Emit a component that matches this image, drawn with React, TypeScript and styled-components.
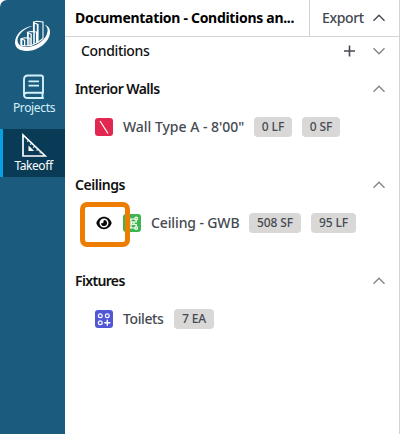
import React from "react";
import styled, { createGlobalStyle } from "styled-components";

const GlobalStyle = createGlobalStyle`
  * { box-sizing: border-box; }
  body { margin: 0; background: #fff; overflow: hidden; }
  svg { display: block; flex: none; }
`;

const Page = styled.div`
  display: flex;
  width: 401px;
  height: 434px;
  background: #fff;
  font-family: "Noto Sans", "Open Sans", sans-serif;
  font-size: 14px;
  color: #111;
`;

const Sidebar = styled.nav`
  width: 65px;
  flex: none;
  background: #1b5b7e;
  border-top-left-radius: 7px;
  display: flex;
  flex-direction: column;
`;

const LogoBox = styled.div`
  height: 65px;
  padding: 18px 0 0 13px;
`;

const NavItem = styled.a<{ $active?: boolean }>`
  height: ${(p) => (p.$active ? 48 : 64)}px;
  padding: ${(p) => (p.$active ? "4px 1px 0 0" : "9px 0 0 3px")};
  display: flex;
  flex-direction: column;
  align-items: center;
  color: ${(p) => (p.$active ? "#fff" : "#d3f1fc")};
  background: ${(p) => (p.$active ? "#0a3b56" : "transparent")};
  border-left: ${(p) => (p.$active ? "3px solid #07a0e0" : "0")};
`;

const NavLabel = styled.span<{ $spacing: number }>`
  font-size: 12px;
  line-height: 16px;
  letter-spacing: ${(p) => p.$spacing}px;
  white-space: nowrap;
`;

const Panel = styled.main`
  width: 335px;
  flex: none;
  border-right: 1px solid #d2d3d5;
`;

const Header = styled.header`
  height: 37px;
  display: flex;
  border-bottom: 1px solid #d2d3d5;
`;

const Title = styled.h1<{ $spacing: number }>`
  margin: 0;
  width: 245px;
  padding-left: 10px;
  border-right: 1px solid #d2d3d5;
  font-size: 14px;
  font-weight: 700;
  line-height: 35px;
  letter-spacing: ${(p) => p.$spacing}px;
  white-space: nowrap;
  color: #000;
`;

const ExportButton = styled.div`
  flex: 1;
  display: flex;
  align-items: center;
  justify-content: space-between;
  padding: 0 14px 1px 12px;
  color: #41464f;
  font-weight: 500;
  letter-spacing: -0.35px;
`;

const Bar = styled.div<{ $indent?: boolean }>`
  height: ${(p) => (p.$indent ? 28 : 38)}px;
  display: flex;
  align-items: center;
  justify-content: space-between;
  padding: 0 14px 0 ${(p) => (p.$indent ? 16 : 10)}px;
`;

const Tools = styled.div`
  display: flex;
  align-items: center;
  gap: 17px;
`;

const Section = styled.section`
  height: 96px;
`;

const Groups = styled.div`
  padding-top: 5px;
`;

const Text = styled.span<{ $spacing?: number; $weight?: number; $muted?: boolean }>`
  font-weight: ${(p) => p.$weight ?? 500};
  letter-spacing: ${(p) => p.$spacing ?? 0}px;
  line-height: 20px;
  white-space: nowrap;
  color: ${(p) => (p.$muted ? "#454a52" : "#111")};
`;

const Row = styled.div<{ $visible?: boolean }>`
  position: relative;
  height: 38px;
  display: flex;
  align-items: center;
  padding-left: ${(p) => (p.$visible ? 58 : 30)}px;
`;

const Name = styled.div<{ $width: number }>`
  width: ${(p) => p.$width}px;
  flex: none;
  padding-left: 10px;
  line-height: 20px;
`;

const Badges = styled.div`
  display: flex;
  gap: 10px;
`;

const Badge = styled.span<{ $width: number }>`
  width: ${(p) => p.$width}px;
  height: 20px;
  border-radius: 4px;
  background: #d9d8d6;
  color: #454a52;
  font-size: 12px;
  font-weight: 500;
  line-height: 20px;
  letter-spacing: -0.1px;
  text-align: center;
  white-space: nowrap;
`;

const Swatch = styled.span<{ $color: string }>`
  width: 18px;
  height: 18px;
  flex: none;
  border-radius: 3px;
  background: ${(p) => p.$color};
`;

const Highlight = styled.div`
  position: absolute;
  left: 15px;
  top: -2px;
  width: 50px;
  height: 45px;
  border: 5px solid #ed7d00;
  border-radius: 7px;
  padding: 9px 0 0 11px;
`;

const Chevron = ({ down, color = "#858589" }: { down?: boolean; color?: string }) => (
  <svg width="12" height="8" viewBox="0 0 12 8" fill="none" stroke={color} strokeWidth="1.4">
    <path d={down ? "M.5 1.2 6 6.7 11.5 1.2" : "M.5 6.8 6 1.3 11.5 6.8"} />
  </svg>
);

const Logo = () => (
  <svg width="38" height="36" viewBox="13 18 38 36" fill="none">
    <path
      fill="#fff"
      d="M33 25.7C23 27 15 34.500 15 42.300C15 48 20 51.300 27.500 51C39 50.500 50 41.500 50 32C50 28 48 25.700 44.500 24.700C47 26.500 48 28.500 47.500 31.500C46.500 39.500 37 46.500 27.500 47C21.500 47.300 17.500 44.500 17.500 40.500C17.500 34.500 24.500 28.300 33 25.700Z"
    />
    <g fill="#1b5b7e" stroke="#fff" strokeWidth="1.1">
      <path d="M33.500 22 37 21.300 43 22V38.500L38.500 42 33.500 44Z" />
      <path d="M27.500 32.300 31 31.500 36.500 32V43L31 45.500H27.500Z" />
      <path d="M21 38.700 24.500 37.800 30 38.300V45.600L25 46 21 45Z" />
    </g>
    <path fill="#fff" d="M33.200 22 38.600 24V42.300L36.800 43V24.800L33.200 23ZM33.200 22H34.800V43.500L33.200 44ZM27.200 32.300 31.800 33.800V45.300H30.500V34.500L27.200 33ZM27.200 32.300H28.800V45.500H27.200ZM20.700 38.500 25.300 39.800V46H24V40.500L20.700 39.500ZM20.700 38.500H22.300V45.500L20.700 44.800Z" />
  </svg>
);

const BookIcon = () => (
  <svg width="24" height="26" viewBox="0 0 24 26" fill="none" stroke="currentColor" strokeWidth="1.9">
    <path d="M21 18.800V3.500Q21 1.500 19 1.500H6Q2 1.500 2 5.500V20.500Q2 24 5.500 24H21.800M5 18.800H21.900M5 18.800Q2 18.800 2 21.300M20.500 18.800V24" />
    <path strokeWidth="1.600" d="M6.500 7.400H17M6.500 11.600H17" />
  </svg>
);

const SetSquareIcon = () => (
  <svg width="26" height="25" viewBox="0 0 26 25" fill="none" stroke="#fff" strokeWidth="1.700">
    <path d="M2 2V23H24.300Z" />
    <path fill="#fff" stroke="none" d="M7.500 12.500V18H13.200Z" />
    <path strokeWidth="1.200" d="M6.200 8.700 7.200 7.700M9.200 11.700 10.200 10.700M12.200 14.700 13.600 13.300M15.600 17.500 16.700 16.400M18.800 20.200 19.500 19.500" />
  </svg>
);

const EyeIcon = () => (
  <svg width="16" height="14" viewBox="0 0 16 14">
    <path fill="#080808" fillRule="evenodd" d="M8 .8C4.500.8 1.700 3 .3 7c1.400 4 4.200 6.200 7.700 6.200S14.300 11 15.700 7C14.300 3 11.500.8 8 .8Zm0 1.700a4.500 4.500 0 1 0 0 9 4.500 4.500 0 1 0 0-9Z" />
    <path fill="#080808" d="M8 4a3 3 0 1 1-3 3.200c1.400.5 3-.7 2.500-2.200Z" />
  </svg>
);

const WallIcon = () => (
  <Swatch $color="#e22850">
    <svg width="18" height="18" fill="none" stroke="#fff" strokeWidth="1.200">
      <path d="M5 3 13 15.500" />
    </svg>
  </Swatch>
);

const AreaIcon = () => (
  <Swatch $color="#3eb54e">
    <svg width="18" height="18" fill="none" stroke="#fff" strokeWidth="1.200">
      <path d="M4 5H12M13.200 6V8H11M11 10.500H13.200V12.500M12 14H4M8 5V14" />
      <circle cx="13.200" cy="4.500" r="1.300" />
      <circle cx="9.800" cy="9.200" r="1.300" />
      <circle cx="13.200" cy="14" r="1.300" />
    </svg>
  </Swatch>
);

const CountIcon = () => (
  <Swatch $color="#5257d5">
    <svg width="18" height="18" fill="none" stroke="#fff" strokeWidth="1.200">
      <circle cx="5.300" cy="5.700" r="1.900" />
      <circle cx="12.300" cy="5.700" r="1.900" />
      <circle cx="5.300" cy="12.700" r="1.900" />
      <path strokeWidth="1.400" d="M12.300 9.700V15.700M9.300 12.700H15.300" />
    </svg>
  </Swatch>
);

export default function App() {
  return (
    <>
      <GlobalStyle />
      <Page>
        <Sidebar>
          <LogoBox><Logo /></LogoBox>
          <NavItem>
            <BookIcon />
            <NavLabel $spacing={-0.35}>Projects</NavLabel>
          </NavItem>
          <NavItem $active>
            <SetSquareIcon />
            <NavLabel $spacing={-0.42}>Takeoff</NavLabel>
          </NavItem>
        </Sidebar>
        <Panel>
          <Header>
            <Title $spacing={-0.3}>Documentation - Conditions an...</Title>
            <ExportButton>
              <span>Export</span>
              <Chevron color="#444952" />
            </ExportButton>
          </Header>
          <Bar $indent>
            <Text $spacing={-0.35}>Conditions</Text>
            <Tools>
              <svg width="13" height="12" stroke="#444952" strokeWidth="1.600">
                <path d="M6.500 .5V11.500M1 6H12" />
              </svg>
              <Chevron down />
            </Tools>
          </Bar>
          <Groups>
            <Section>
              <Bar><Text $weight={600} $spacing={-0.57}>Interior Walls</Text><Chevron /></Bar>
              <Row>
                <WallIcon />
                <Name $width={141}><Text $muted $spacing={-0.03}>Wall Type A - 8'00"</Text></Name>
                <Badges><Badge $width={38}>0 LF</Badge><Badge $width={38}>0 SF</Badge></Badges>
              </Row>
            </Section>
            <Section>
              <Bar><Text $weight={600} $spacing={-0.45}>Ceilings</Text><Chevron /></Bar>
              <Row $visible>
                <AreaIcon />
                <Name $width={108}><Text $muted $spacing={-0.12}>Ceiling - GWB</Text></Name>
                <Badges><Badge $width={52}>508 SF</Badge><Badge $width={45}>95 LF</Badge></Badges>
                <Highlight><EyeIcon /></Highlight>
              </Row>
            </Section>
            <Section>
              <Bar><Text $weight={600} $spacing={-0.65}>Fixtures</Text><Chevron /></Bar>
              <Row>
                <CountIcon />
                <Name $width={61}><Text $muted $spacing={-0.4}>Toilets</Text></Name>
                <Badges><Badge $width={40}>7 EA</Badge></Badges>
              </Row>
            </Section>
          </Groups>
        </Panel>
      </Page>
    </>
  );
}
